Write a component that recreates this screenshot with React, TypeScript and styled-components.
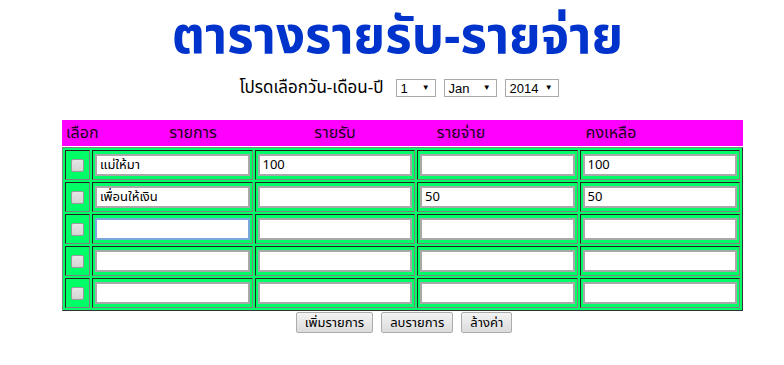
import React from 'react';
import styled, { createGlobalStyle } from 'styled-components';

const GlobalStyle = createGlobalStyle`
  html, body {
    margin: 0;
    padding: 0;
    background: #ffffff;
  }
  body {
    font-family: Tahoma, "Noto Sans Thai", "Noto Sans", "DejaVu Sans", sans-serif;
    color: #000000;
  }
`;

const Page = styled.div`
  width: 784px;
  padding-top: 1px;
`;

const Title = styled.h1`
  margin: -2px 0 0 0;
  text-align: center;
  padding-left: 11px;
  font-size: 51px;
  line-height: normal;
  font-weight: bold;
  color: #0033cc;
`;

const DateRow = styled.div`
  display: flex;
  align-items: center;
  justify-content: center;
  gap: 8px;
  height: 22px;
  margin-top: 1px;
  padding-left: 14px;
  font-size: 17px;
`;

const DateLabel = styled.span`
  margin-right: 4px;
`;

const SelectBox = styled.div<{ $w: number }>`
  width: ${(p) => p.$w}px;
  height: 18px;
  box-sizing: border-box;
  border: 1px solid #a9a9a9;
  background: #ffffff;
  display: flex;
  align-items: center;
  justify-content: space-between;
  padding: 0 5px 0 4px;
  font-family: "Liberation Sans", Arial, sans-serif;
  font-size: 13px;
  color: #000000;
`;

const Arrow = styled.span`
  font-size: 8px;
  line-height: 1;
`;

const Board = styled.div`
  width: 681px;
  margin: 21px 0 0 62px;
`;

const HeaderBar = styled.div`
  display: grid;
  grid-template-columns: 38px 186px 98px 154px 146px 1fr;
  height: 26px;
  align-items: center;
  background: #ff00ff;
  color: #220022;
  font-size: 16px;
  margin-bottom: 1px;
`;

const HeadCell = styled.div<{ $left?: boolean }>`
  text-align: ${(p) => (p.$left ? 'left' : 'center')};
  padding-left: ${(p) => (p.$left ? '4px' : '0')};
  white-space: nowrap;
`;

const Grid = styled.table`
  width: 681px;
  table-layout: fixed;
  border-collapse: separate;
  border-spacing: 2px;
  background: #00ff66;
  border-style: solid;
  border-width: 1px;
  border-color: #808080 #333333 #333333 #808080;
`;

const Cell = styled.td`
  padding: 3px 2px;
  border-style: solid;
  border-width: 1px;
  border-color: #222222 #808080 #808080 #222222;
  vertical-align: middle;
`;

const CheckCell = styled(Cell)`
  width: 19px;
  text-align: center;
`;

const Check = styled.input`
  appearance: none;
  display: block;
  margin: 0 auto;
  width: 13px;
  height: 13px;
  border: 1px solid #9a9a9a;
  border-radius: 2px;
  background: linear-gradient(#e6e6e6, #d4d4d4);
`;

const TextInput = styled.input<{ $focus?: boolean }>`
  display: block;
  box-sizing: border-box;
  width: 100%;
  height: 22px;
  margin: 0;
  padding: 0 3px;
  border: 2px solid ${(p) => (p.$focus ? '#7aa7dc' : '#a8a8a8')};
  background: #ffffff;
  font-family: Tahoma, "Noto Sans Thai", "Liberation Sans", sans-serif;
  font-size: 13px;
  color: #000000;
  outline: none;
`;

const Actions = styled.div`
  display: flex;
  justify-content: center;
  gap: 8px;
  margin-top: 1px;
  padding-left: 24px;
`;

const Button = styled.button`
  height: 21px;
  padding: 0 8px;
  border: 1px solid #acacac;
  border-radius: 2px;
  background: linear-gradient(#f3f3f3, #dcdcdc);
  font-family: Tahoma, "Noto Sans Thai", "Liberation Sans", sans-serif;
  font-size: 13px;
  color: #000000;
`;

type Row = { item: string; income: string; expense: string; balance: string };

const rows: Row[] = [
  { item: 'แม่ให้มา', income: '100', expense: '', balance: '100' },
  { item: 'เพื่อนให้เงิน', income: '', expense: '50', balance: '50' },
  { item: '', income: '', expense: '', balance: '' },
  { item: '', income: '', expense: '', balance: '' },
  { item: '', income: '', expense: '', balance: '' },
];

const App = () => {
  return (
    <Page>
      <GlobalStyle />
      <Title>ตารางรายรับ-รายจ่าย</Title>
      <DateRow>
        <DateLabel>โปรดเลือกวัน-เดือน-ปี</DateLabel>
        <SelectBox $w={40}>
          1<Arrow>▼</Arrow>
        </SelectBox>
        <SelectBox $w={53}>
          Jan<Arrow>▼</Arrow>
        </SelectBox>
        <SelectBox $w={54}>
          2014<Arrow>▼</Arrow>
        </SelectBox>
      </DateRow>
      <Board>
        <HeaderBar>
          <HeadCell $left>เลือก</HeadCell>
          <HeadCell>รายการ</HeadCell>
          <HeadCell>รายรับ</HeadCell>
          <HeadCell>รายจ่าย</HeadCell>
          <HeadCell>คงเหลือ</HeadCell>
          <HeadCell />
        </HeaderBar>
        <Grid>
          <tbody>
            {rows.map((r, i) => (
              <tr key={i}>
                <CheckCell>
                  <Check type="checkbox" />
                </CheckCell>
                <Cell>
                  <TextInput defaultValue={r.item} $focus={i === 2} />
                </Cell>
                <Cell>
                  <TextInput defaultValue={r.income} />
                </Cell>
                <Cell>
                  <TextInput defaultValue={r.expense} />
                </Cell>
                <Cell>
                  <TextInput defaultValue={r.balance} />
                </Cell>
              </tr>
            ))}
          </tbody>
        </Grid>
      </Board>
      <Actions>
        <Button>เพิ่มรายการ</Button>
        <Button>ลบรายการ</Button>
        <Button>ล้างค่า</Button>
      </Actions>
    </Page>
  );
};

export default App;
